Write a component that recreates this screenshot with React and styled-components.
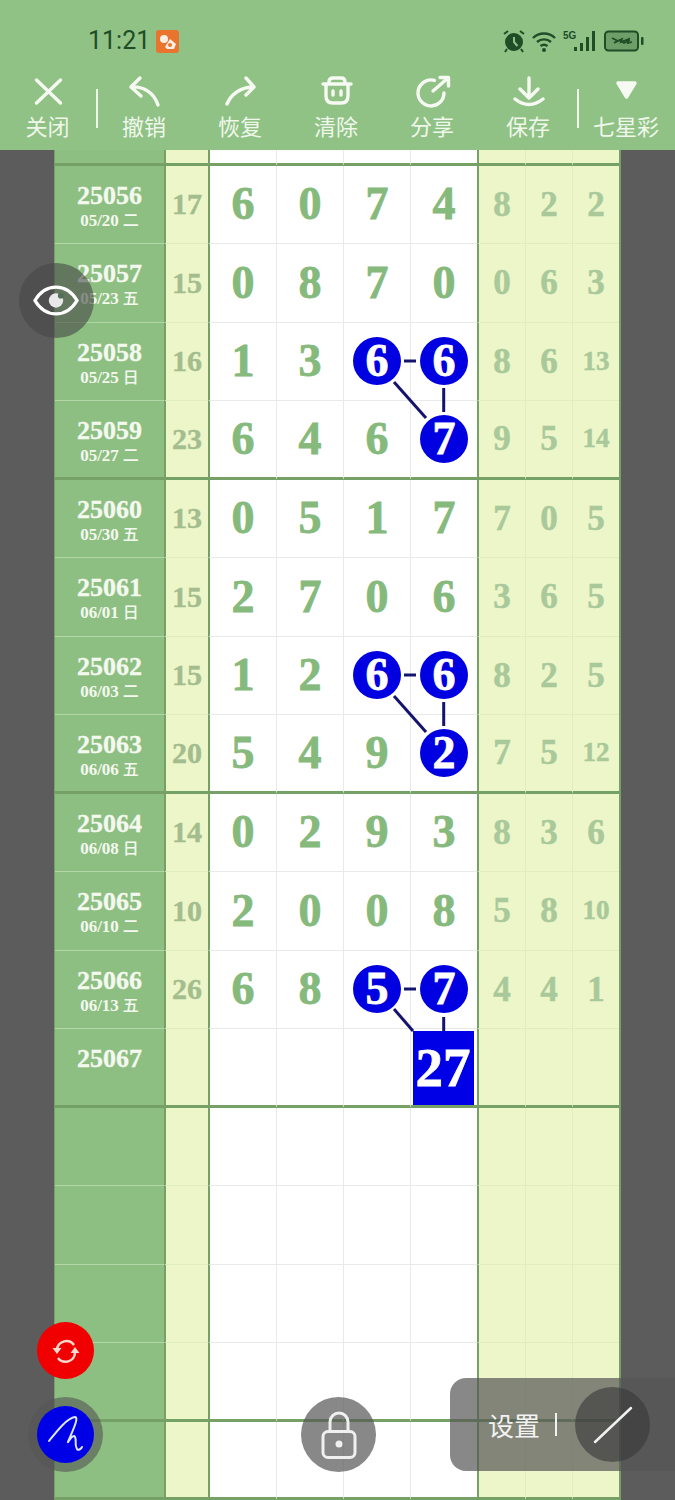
import React from 'react';
import styled, { createGlobalStyle } from 'styled-components';

const GlobalStyle = createGlobalStyle`
  html, body {
    margin: 0;
    padding: 0;
    background: #5c5c5c;
  }
`;

const SANS = '"Noto Sans CJK SC", "Noto Sans", sans-serif';
const SERIF = '"Liberation Serif", "Noto Sans CJK SC", serif';

const HEAVY_LINE = '#75a066';
const CELL_TONES = {
  issue: { bg: '#8ebf82', line: '#b2d6a8' },
  pale: { bg: '#edf6c8', line: '#e2edbf' },
  white: { bg: '#ffffff', line: '#e9e9e9' },
};

const Stage = styled.div`
  position: relative;
  width: 675px;
  height: 1500px;
  overflow: hidden;
  background: #5c5c5c;
`;

const Header = styled.header`
  height: 150px;
  background: #90c286;
  display: flex;
  flex-direction: column;
`;

const StatusBar = styled.div`
  height: 75px;
  box-sizing: border-box;
  padding: 7px 31px 0 88px;
  display: flex;
  align-items: center;
  color: #1f4d26;
`;

const Clock = styled.span`
  font: 400 25px/30px Roboto, sans-serif;
`;

const AppBadge = styled.svg`
  width: 23px;
  height: 23px;
  margin-left: 6px;
`;

const StatusIcons = styled.div`
  margin-left: auto;
  display: flex;
  align-items: center;
`;

const NetLabel = styled.span`
  font: 700 10px/10px "Liberation Sans", sans-serif;
  align-self: flex-start;
  width: 11px;
  margin: 2px 0 0 6px;
`;

const Toolbar = styled.nav`
  height: 75px;
  display: flex;
  align-items: flex-start;
`;

const ToolItem = styled.div`
  flex: ${(p) => (p.$grow ? '1' : `0 0 ${p.$width || 96}px`)};
  display: flex;
  flex-direction: column;
  align-items: center;
`;

const ToolIcon = styled.svg`
  width: 40px;
  height: 34px;
  fill: none;
  stroke: #f6faf2;
  stroke-width: 3.4;
  stroke-linecap: round;
  stroke-linejoin: round;
`;

const ToolLabel = styled.span`
  margin-top: 2px;
  font: 400 22px/28px ${SANS};
  color: #eff7ea;
  white-space: nowrap;
`;

const ToolRule = styled.i`
  flex: 0 0 2px;
  height: 39px;
  margin: 14px -2px 0 1px;
  background: #eff7ea;
`;

const Board = styled.main`
  margin-left: 54px;
  width: 564px;
  border-left: 1px solid ${HEAVY_LINE};
  border-right: 2px solid ${HEAVY_LINE};
`;

const Row = styled.div`
  display: grid;
  grid-template-columns: 109px 44px 68px 67px 67px 67px 48px 47px 47px;
  height: ${(p) => (p.$stub ? '15.5px' : '78.5px')};
`;

const Cell = styled.div`
  box-sizing: border-box;
  min-width: 0;
  display: flex;
  align-items: center;
  justify-content: center;
  background: ${(p) => CELL_TONES[p.$tone].bg};
  border-left: ${(p) => {
    if (p.$heavy) return `2px solid ${HEAVY_LINE}`;
    if (p.$tone === 'issue') return 'none';
    return `1px solid ${CELL_TONES[p.$tone].line}`;
  }};
  border-bottom: ${(p) =>
    p.$end ? `3px solid ${HEAVY_LINE}` : `1px solid ${CELL_TONES[p.$tone].line}`};
`;

const IssueCell = styled(Cell)`
  flex-direction: column;
  justify-content: flex-start;
  padding-top: 16px;
`;

const IssueNumber = styled.span`
  font: 700 26px/27px ${SERIF};
  color: #f4f9f0;
  -webkit-text-stroke: 0.3px #f4f9f0;
`;

const IssueDate = styled.span`
  font: 700 17px/21px ${SERIF};
  color: #f4f9f0;
`;

const Weekday = styled.span`
  font: 500 16px/21px ${SANS};
  margin-left: 4px;
`;

const SumValue = styled.span`
  font: 700 30px/30px ${SERIF};
  color: #a3bd8e;
  -webkit-text-stroke: 0.4px #a3bd8e;
`;

const Digit = styled.span`
  font: 700 46px/46px ${SERIF};
  color: #86b97c;
  -webkit-text-stroke: 0.8px #86b97c;
`;

const Ball = styled.span`
  width: 48px;
  height: 48px;
  border-radius: 50%;
  background: #0000e0;
  box-shadow: 0 0 0 2px #ffffff;
  color: #ffffff;
  display: flex;
  align-items: center;
  justify-content: center;
  font: 700 46px/46px ${SERIF};
  -webkit-text-stroke: 0.8px #ffffff;
`;

const TotalBox = styled.span`
  align-self: flex-end;
  width: 61px;
  height: 73.5px;
  margin-right: 2px;
  background: #0000e6;
  color: #ffffff;
  display: flex;
  align-items: center;
  justify-content: center;
  font: 700 55px/55px ${SERIF};
  -webkit-text-stroke: 0.8px #ffffff;
`;

const TailValue = styled.span`
  font: 700 ${(p) => (p.$small ? 27 : 35)}px/35px ${SERIF};
  color: #a9c99b;
  -webkit-text-stroke: 0.5px #a9c99b;
`;

const LinkLayer = styled.svg`
  position: absolute;
  left: 0;
  top: 0;
  width: 675px;
  height: 1500px;
  pointer-events: none;
  stroke: #14146e;
  stroke-width: 3;
`;

const EyeButton = styled.div`
  position: absolute;
  left: 18.5px;
  top: 262.5px;
  width: 75px;
  height: 75px;
  border-radius: 50%;
  background: rgba(70, 70, 70, 0.6);
  display: flex;
  align-items: center;
  justify-content: center;
`;

const RefreshButton = styled.div`
  position: absolute;
  left: 37px;
  top: 1322px;
  width: 57px;
  height: 57px;
  border-radius: 50%;
  background: #f00000;
  display: flex;
  align-items: center;
  justify-content: center;
`;

const PenRing = styled.div`
  position: absolute;
  left: 28px;
  top: 1397px;
  width: 75px;
  height: 75px;
  border-radius: 50%;
  background: rgba(85, 85, 85, 0.62);
  display: flex;
  align-items: center;
  justify-content: center;
`;

const PenFace = styled.div`
  width: 57px;
  height: 57px;
  border-radius: 50%;
  background: #0000e6;
`;

const LockButton = styled.div`
  position: absolute;
  left: 300.5px;
  top: 1396.5px;
  width: 75px;
  height: 75px;
  border-radius: 50%;
  background: rgba(85, 85, 85, 0.7);
`;

const SettingsPanel = styled.div`
  position: absolute;
  left: 450px;
  top: 1378px;
  width: 225px;
  height: 93px;
  box-sizing: border-box;
  padding-left: 38px;
  border-radius: 16px 0 0 16px;
  background: rgba(85, 85, 85, 0.7);
  display: flex;
  align-items: center;
`;

const SettingsLabel = styled.span`
  font: 400 26px/30px ${SANS};
  color: #f2f2f2;
  width: 52px;
  white-space: nowrap;
`;

const SettingsRule = styled.i`
  width: 2px;
  height: 23px;
  margin-left: 15px;
  background: #f2f2f2;
`;

const PenKnob = styled.div`
  width: 75px;
  height: 75px;
  margin-left: 18px;
  border-radius: 50%;
  background: rgba(55, 55, 55, 0.6);
  display: flex;
  align-items: center;
  justify-content: center;
`;

const ROWS = [
  ['25056', '05/20', '二', 17, [6, 0, 7, 4], [8, 2, 2]],
  ['25057', '05/23', '五', 15, [0, 8, 7, 0], [0, 6, 3]],
  ['25058', '05/25', '日', 16, [1, 3, '*6', '*6'], [8, 6, 13]],
  ['25059', '05/27', '二', 23, [6, 4, 6, '*7'], [9, 5, 14]],
  ['25060', '05/30', '五', 13, [0, 5, 1, 7], [7, 0, 5]],
  ['25061', '06/01', '日', 15, [2, 7, 0, 6], [3, 6, 5]],
  ['25062', '06/03', '二', 15, [1, 2, '*6', '*6'], [8, 2, 5]],
  ['25063', '06/06', '五', 20, [5, 4, 9, '*2'], [7, 5, 12]],
  ['25064', '06/08', '日', 14, [0, 2, 9, 3], [8, 3, 6]],
  ['25065', '06/10', '二', 10, [2, 0, 0, 8], [5, 8, 10]],
  ['25066', '06/13', '五', 26, [6, 8, '*5', '*7'], [4, 4, 1]],
  ['25067', '', '', '', ['', '', '', '#27'], ['', '', '']],
  ['', '', '', '', ['', '', '', ''], ['', '', '']],
  ['', '', '', '', ['', '', '', ''], ['', '', '']],
  ['', '', '', '', ['', '', '', ''], ['', '', '']],
  ['', '', '', '', ['', '', '', ''], ['', '', '']],
  ['', '', '', '', ['', '', '', ''], ['', '', '']],
];

function DrawValue({ value }) {
  if (typeof value === 'string' && value[0] === '*') return <Ball>{value.slice(1)}</Ball>;
  if (typeof value === 'string' && value[0] === '#') return <TotalBox>{value.slice(1)}</TotalBox>;
  return <Digit>{value}</Digit>;
}

function BoardRow({ data, end }) {
  const [issue, date, weekday, sum, digits, tails] = data;
  return (
    <Row>
      <IssueCell $tone="issue" $end={end}>
        <IssueNumber>{issue}</IssueNumber>
        {date && (
          <IssueDate>
            {date}
            <Weekday>{weekday}</Weekday>
          </IssueDate>
        )}
      </IssueCell>
      <Cell $tone="pale" $heavy $end={end}>
        <SumValue>{sum}</SumValue>
      </Cell>
      {digits.map((value, i) => (
        <Cell key={i} $tone="white" $heavy={i === 0} $end={end}>
          <DrawValue value={value} />
        </Cell>
      ))}
      {tails.map((value, i) => (
        <Cell key={i} $tone="pale" $heavy={i === 0} $end={end}>
          <TailValue $small={value > 9}>{value}</TailValue>
        </Cell>
      ))}
    </Row>
  );
}

function StubRow() {
  return (
    <Row $stub>
      <Cell $tone="issue" $end />
      <Cell $tone="pale" $heavy $end />
      <Cell $tone="white" $heavy $end />
      <Cell $tone="white" $end />
      <Cell $tone="white" $end />
      <Cell $tone="white" $end />
      <Cell $tone="pale" $heavy $end />
      <Cell $tone="pale" $end />
      <Cell $tone="pale" $end />
    </Row>
  );
}

function TriadLinks({ dy }) {
  return (
    <g transform={`translate(0 ${dy})`}>
      <line x1="404" y1="361" x2="416" y2="361" />
      <line x1="394" y1="382" x2="426" y2="418" />
      <line x1="443.7" y1="388" x2="443.7" y2="412" />
    </g>
  );
}

const TOOLS = [
  {
    label: '关闭',
    width: 95,
    rule: true,
    icon: <path d="M8.500 5 32.500 28M32.500 5 8.500 28" />,
  },
  {
    label: '撤销',
    icon: <path d="M16 3 7 12 17 21M7 12C20 11 30 18 34 30" />,
  },
  {
    label: '恢复',
    icon: <path d="M26 3 34 12 26 20M34 12C21 12 11 19 7 29" />,
  },
  {
    label: '清除',
    icon: (
      <path d="M7 9H35M13 9V7C13 4 15 3 17 3H25C27 3 29 4 29 7V9M10 9V21C10 25 12 28 17 28H25C30 28 32 25 32 21V9M17 16V20M25 16V20" />
    ),
  },
  {
    label: '分享',
    icon: <path d="M22.400 5.400A13 13 0 1 0 32 18M21 16 36 3M28 2.500H36.500V11" />,
  },
  {
    label: '保存',
    rule: true,
    icon: <path d="M21 3V22M12 14 21 23 30 14M7 24Q21 35 35 24" />,
  },
  {
    label: '七星彩',
    grow: true,
    icon: <path d="M12 8H29L20.500 22Z" fill="#f6faf2" />,
  },
];

export default function App() {
  return (
    <Stage>
      <GlobalStyle />
      <Header>
        <StatusBar>
          <Clock>11:21</Clock>
          <AppBadge viewBox="0 0 23 23">
            <rect width="23" height="23" rx="3" fill="#e8742e" />
            <circle cx="8" cy="9" r="4" fill="#fbeee2" />
            <path d="M9 17 14 9 20 14 18 19H11Z" fill="#fbeee2" />
            <circle cx="14" cy="15" r="2" fill="#e8742e" />
          </AppBadge>
          <StatusIcons>
            <svg width="24" height="24" viewBox="0 0 24 24" fill="#1f4d26">
              <circle cx="12" cy="13" r="9" />
              <path d="M12 8V13L15.500 17" stroke="#90c286" strokeWidth="2" fill="none" />
              <path d="M2 5 6 2M22 5 18 2M5 20 3 23M19 20 21 23" stroke="#1f4d26" strokeWidth="2" fill="none" />
            </svg>
            <svg width="26" height="24" viewBox="0 0 26 24" fill="none" stroke="#1f4d26" strokeWidth="2.400" style={{ marginLeft: 5 }}>
              <path d="M2 9C8 3 18 3 24 9M6 13C10 9.500 16 9.500 20 13M9.500 17C11.500 15.500 14.500 15.500 16.500 17" />
              <circle cx="13" cy="21" r="2" fill="#1f4d26" stroke="none" />
            </svg>
            <NetLabel>5G</NetLabel>
            <svg width="23" height="22" viewBox="0 0 23 22" fill="#1f4d26">
              <rect x="0" y="17" width="3" height="4" />
              <rect x="6" y="13" width="3" height="8" />
              <rect x="12" y="7" width="3" height="14" />
              <rect x="18" y="1" width="3" height="20" />
            </svg>
            <svg width="40" height="22" viewBox="0 0 40 22" style={{ marginLeft: 7 }}>
              <rect x="1" y="1.500" width="33" height="19" rx="3.500" fill="#6f9f69" stroke="#1f4d26" strokeWidth="2" />
              <rect x="37" y="7" width="2.500" height="8" rx="1" fill="#1f4d26" />
              <path d="M8 8 14 11 11 12 18 9 17 12 25 9 24 13 28 12 M10 13 16 10 20 13 26 10" stroke="#1f4d26" strokeWidth="1.800" fill="none" />
            </svg>
          </StatusIcons>
        </StatusBar>
        <Toolbar>
          {TOOLS.map((tool) => (
            <React.Fragment key={tool.label}>
              <ToolItem $width={tool.width} $grow={tool.grow}>
                <ToolIcon viewBox="0 0 40 34">{tool.icon}</ToolIcon>
                <ToolLabel>{tool.label}</ToolLabel>
              </ToolItem>
              {tool.rule && <ToolRule />}
            </React.Fragment>
          ))}
        </Toolbar>
      </Header>

      <Board>
        <StubRow />
        {ROWS.map((data, i) => (
          <BoardRow key={i} data={data} end={i % 4 === 3 || i === ROWS.length - 1} />
        ))}
      </Board>

      <LinkLayer viewBox="0 0 675 1500">
        <TriadLinks dy={0} />
        <TriadLinks dy={314} />
        <line x1="404" y1="989" x2="416" y2="989" />
        <line x1="394" y1="1009" x2="413" y2="1031" />
        <line x1="443.7" y1="1017" x2="443.7" y2="1031" />
      </LinkLayer>

      <EyeButton>
        <svg width="46" height="33" viewBox="0 0 48 34" fill="none" stroke="#ffffff" strokeWidth="3.500" strokeLinejoin="round">
          <path d="M2 17C8 7 16 3 24 3S40 7 46 17C40 27 32 31 24 31S8 27 2 17Z" />
          <circle cx="24" cy="17" r="7.500" fill="#e8e8e8" stroke="none" />
          <circle cx="29" cy="12" r="3" fill="#55705a" stroke="none" />
        </svg>
      </EyeButton>

      <RefreshButton>
        <svg width="30" height="30" viewBox="0 0 30 30" fill="none" stroke="#ffd9d0" strokeWidth="2.500">
          <path d="M6 13A9.500 9.500 0 0 1 23 9M24 17A9.500 9.500 0 0 1 7 22" />
          <path d="M1.500 12H10.500L6 18Z M19.500 17H28.500L24 11Z" fill="#ffd9d0" stroke="none" />
        </svg>
      </RefreshButton>

      <PenRing>
        <PenFace>
          <svg width="57" height="57" viewBox="0 0 57 57" fill="none" stroke="#dfe6ff" strokeWidth="2" strokeLinecap="round">
            <path d="M12 35C20 25 30 12 38 11C43 11 33 30 31 36C30 38 36 27 38 31C40 34 37 38 40 43C41 45 44 43 45 41" />
          </svg>
        </PenFace>
      </PenRing>

      <LockButton>
        <svg width="75" height="75" viewBox="0 0 75 75" fill="none" stroke="#f0f0f0" strokeWidth="3">
          <rect x="22" y="34.500" width="32" height="26" rx="5" />
          <path d="M29 34.500V25A9 9 0 0 1 47 25V34.500" />
          <circle cx="38" cy="47" r="3.500" fill="#f0f0f0" stroke="none" />
        </svg>
      </LockButton>

      <SettingsPanel>
        <SettingsLabel>设置</SettingsLabel>
        <SettingsRule />
        <PenKnob>
          <svg width="44" height="42" viewBox="0 0 44 42" stroke="#f0f0f0" strokeWidth="2.500" strokeLinecap="round">
            <line x1="4" y1="38" x2="40" y2="4" />
          </svg>
        </PenKnob>
      </SettingsPanel>
    </Stage>
  );
}
